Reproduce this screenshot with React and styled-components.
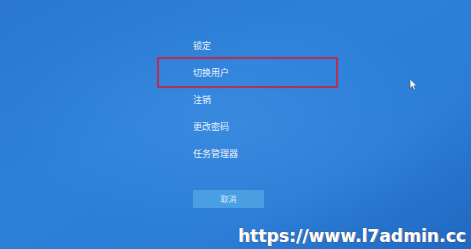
import React from "react"
import styled, { createGlobalStyle } from "styled-components"

const GlobalStyle = createGlobalStyle`
  html, body {
    margin: 0;
    padding: 0;
    background: #2c80d8;
  }
`

const Screen = styled.div`
  position: relative;
  width: 471px;
  height: 249px;
  overflow: hidden;
  background:
    radial-gradient(ellipse at 50% 50%, rgba(70, 150, 230, 0.45) 0%, rgba(70, 150, 230, 0) 65%),
    linear-gradient(150deg, #2a78d0 0%, #2d81d9 40%, #2b7dd6 70%, #2168c0 100%);
  font-family: "Noto Sans CJK SC", "Noto Sans", sans-serif;
  display: flex;
  flex-direction: column;
  padding: 32px 0 0 193px;
  box-sizing: border-box;
`

const Menu = styled.ul`
  list-style: none;
  margin: 0;
  padding: 0;
  display: flex;
  flex-direction: column;
`

const Item = styled.li`
  position: relative;
  height: 27px;
  line-height: 27px;
  font-size: 9px;
  color: #e8f1fb;

  ${(p) =>
    p.$marked &&
    `
    &::after {
      content: "";
      position: absolute;
      left: -36px;
      top: -2px;
      width: 181px;
      height: 31px;
      box-sizing: border-box;
      border: 2px solid #b3305a;
      border-radius: 1px;
      box-shadow: 0 0 1px rgba(179, 48, 90, 0.7);
    }
  `}
`

const CancelButton = styled.button`
  margin-top: 23px;
  width: 71px;
  height: 18px;
  border: none;
  padding: 0;
  background: #4a9fe3;
  color: #d6eafb;
  font-family: "Noto Sans CJK SC", "Noto Sans", sans-serif;
  font-size: 8px;
  line-height: 18px;
`

const Watermark = styled.div`
  position: absolute;
  right: 5px;
  bottom: 4px;
  font-family: "DejaVu Sans", sans-serif;
  font-weight: bold;
  font-size: 17px;
  letter-spacing: 0.1px;
  color: #ffffff;
  text-shadow: 0 0 1px rgba(0, 20, 60, 0.9), 0.5px 0 0 #ffffff;
  line-height: 18px;
`

const Cursor = styled.svg`
  position: absolute;
  left: 409px;
  top: 78px;
`

const items = ["锁定", "切换用户", "注销", "更改密码", "任务管理器"]

export default function App() {
  return (
    <>
      <GlobalStyle />
      <Screen>
        <Menu>
          {items.map((label, i) => (
            <Item key={label} $marked={i === 1}>
              {label}
            </Item>
          ))}
        </Menu>
        <div>
          <CancelButton>取消</CancelButton>
        </div>
        <Cursor width="9" height="13" viewBox="0 0 9 13">
          <path d="M1 1 L1 10.5 L3.4 8.3 L5 12 L6.5 11.3 L5 7.8 L8 7.8 Z" fill="#f2f6fb" stroke="#1d4f8f" strokeWidth="0.6" />
        </Cursor>
        <Watermark>https://www.l7admin.cc</Watermark>
      </Screen>
    </>
  )
}
